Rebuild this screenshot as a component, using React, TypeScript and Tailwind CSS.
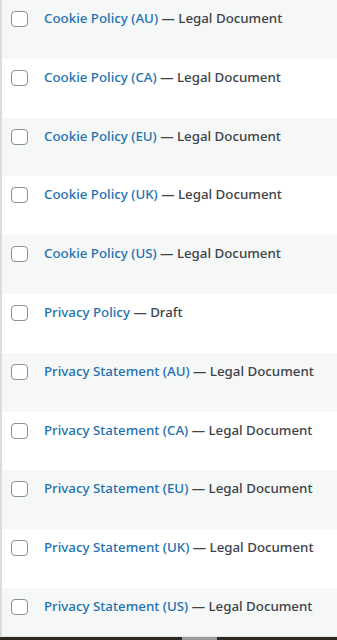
import React from "react";

const rows: { title: string; state: string }[] = [
  { title: "Cookie Policy (AU)", state: "Legal Document" },
  { title: "Cookie Policy (CA)", state: "Legal Document" },
  { title: "Cookie Policy (EU)", state: "Legal Document" },
  { title: "Cookie Policy (UK)", state: "Legal Document" },
  { title: "Cookie Policy (US)", state: "Legal Document" },
  { title: "Privacy Policy", state: "Draft" },
  { title: "Privacy Statement (AU)", state: "Legal Document" },
  { title: "Privacy Statement (CA)", state: "Legal Document" },
  { title: "Privacy Statement (EU)", state: "Legal Document" },
  { title: "Privacy Statement (UK)", state: "Legal Document" },
  { title: "Privacy Statement (US)", state: "Legal Document" },
];

export default function App() {
  return (
    <div className="relative w-[337px] h-[640px] overflow-hidden bg-white" style={{ fontFamily: '"Noto Sans", "Open Sans", sans-serif' }}>
      <div className="border-l-2 border-[#dcdcde] flex flex-col">
        {rows.map((r, i) => (
          <div
            key={r.title}
            className={`h-[58.8px] shrink-0 flex items-start pl-[9px] pt-[11px] ${i % 2 === 0 ? "bg-[#f6f7f7]" : "bg-white"}`}
          >
            <span className="w-[17px] h-[16px] rounded-[4px] border border-[#8c8f94] bg-white shrink-0" />
            <span className="ml-[16px] -mt-[2px] text-[13.3px] leading-[19px] font-medium whitespace-nowrap">
              <span className="text-[#2271b1]">{r.title}</span>
              <span className="text-[#3c434a]"> — {r.state}</span>
            </span>
          </div>
        ))}
      </div>
      <div className="absolute left-0 right-0 bottom-0 h-[4px] flex flex-col">
        <div className="h-px bg-[#e6e6e6]" />
        <div className="flex-1 bg-[#2d2a24] relative">
          <div className="absolute left-[182px] w-[35px] top-0 bottom-0 bg-[#9a9a9a]" />
        </div>
      </div>
    </div>
  );
}
